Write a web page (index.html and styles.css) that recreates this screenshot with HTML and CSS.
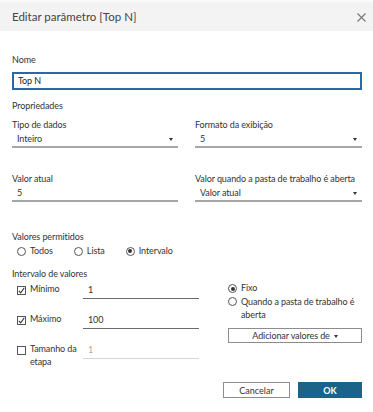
FILE: index.html
```html
<!DOCTYPE html>
<html lang="pt">
<head>
    <meta charset="UTF-8">
    <meta name="viewport" content="width=device-width, initial-scale=1.0">
    <title>Editar parâmetro</title>
    <link rel="stylesheet" href="styles.css">
</head>
<body>
    <div class="dialog">
        <div class="dlg-head">
            <span class="dlg-title">Editar parâmetro [Top N]</span>
            <span class="close">
                <svg width="9" height="9" viewBox="0 0 9 9"><path d="M0.5 0.5 L8.5 8.5 M8.5 0.5 L0.5 8.5" stroke="#777" stroke-width="1.1" fill="none"/></svg>
            </span>
        </div>

        <div class="dlg-body">
            <div class="lbl">Nome</div>
            <div class="name-input">Top N</div>

            <div class="lbl section">Propriedades</div>
            <div class="props">
                <div class="field">
                    <div class="lbl">Tipo de dados</div>
                    <div class="select">Inteiro<span class="caret"></span></div>
                </div>
                <div class="field">
                    <div class="lbl">Formato da exibição</div>
                    <div class="select">5<span class="caret"></span></div>
                </div>
                <div class="field">
                    <div class="lbl">Valor atual</div>
                    <div class="select">5</div>
                </div>
                <div class="field">
                    <div class="lbl">Valor quando a pasta de trabalho é aberta</div>
                    <div class="select">Valor atual<span class="caret"></span></div>
                </div>
            </div>

            <div class="lbl allowed">Valores permitidos</div>
            <div class="radios">
                <span class="opt"><span class="radio"></span>Todos</span>
                <span class="opt"><span class="radio"></span>Lista</span>
                <span class="opt"><span class="radio on"></span>Intervalo</span>
            </div>

            <div class="lbl interval">Intervalo de valores</div>
            <div class="range">
                <div class="range-left">
                    <div class="range-row">
                        <span class="check on"><svg width="7" height="7" viewBox="0 0 7 7"><path d="M0.8 3.8 L2.7 5.8 L6.3 0.8" stroke="#333" stroke-width="1.1" fill="none"/></svg></span>
                        <span class="range-lbl">Mínimo</span>
                        <span class="range-input">1</span>
                    </div>
                    <div class="range-row">
                        <span class="check on"><svg width="7" height="7" viewBox="0 0 7 7"><path d="M0.8 3.8 L2.7 5.8 L6.3 0.8" stroke="#333" stroke-width="1.1" fill="none"/></svg></span>
                        <span class="range-lbl">Máximo</span>
                        <span class="range-input">100</span>
                    </div>
                    <div class="range-row">
                        <span class="check"></span>
                        <span class="range-lbl">Tamanho da etapa</span>
                        <span class="range-input off">1</span>
                    </div>
                </div>
                <div class="range-right">
                    <div class="opt-line"><span class="radio on"></span><span>Fixo</span></div>
                    <div class="opt-line two"><span class="radio"></span><span>Quando a pasta de trabalho é aberta</span></div>
                    <button class="add-btn">Adicionar valores de<span class="caret"></span></button>
                </div>
            </div>

            <div class="dlg-foot">
                <button class="btn cancel">Cancelar</button>
                <button class="btn ok">OK</button>
            </div>
        </div>
    </div>
</body>
</html>
```

FILE: styles.css
```css
body {
    margin: 0;
    background-color: #fff;
    font-family: Lato, "Liberation Sans", sans-serif;
    color: #333;
}

.dialog {
    width: 373px;
    height: 412px;
    background-color: #fff;
}

.dlg-head {
    display: flex;
    align-items: center;
    justify-content: space-between;
    height: 29px;
    border-top: 2px solid #fafafa;
    background-color: #f3f3f3;
    padding: 0 7px 0 12px;
}

.dlg-title {
    font-size: 11.5px;
    color: #444;
}

.close {
    display: flex;
    margin-top: 1px;
}

.dlg-body {
    padding: 22px 11px 0 12px;
    font-size: 9px;
    letter-spacing: -0.1px;
}

.lbl {
    line-height: 14px;
    color: #333;
}

.name-input {
    margin-top: 5px;
    height: 14px;
    border: 2px solid #2a67ad;
    padding-left: 4px;
    line-height: 14px;
    color: #222;
}

.section {
    margin-top: 9px;
}

.props {
    display: grid;
    grid-template-columns: 166px 167px;
    column-gap: 17px;
    row-gap: 24px;
    margin-top: 5px;
}

.select {
    display: flex;
    align-items: center;
    justify-content: space-between;
    height: 14px;
    padding: 0 5px;
    border-bottom: 2px solid #a6a6a6;
    line-height: 14px;
}

.caret {
    width: 0;
    height: 0;
    border-left: 2.5px solid transparent;
    border-right: 2.5px solid transparent;
    border-top: 3px solid #333;
    margin-top: 1px;
}

.allowed {
    margin-top: 28px;
}

.radios {
    display: flex;
    gap: 21px;
    height: 14px;
    padding-left: 5px;
    line-height: 14px;
}

.opt {
    display: flex;
    align-items: center;
    gap: 4px;
}

.radio {
    box-sizing: border-box;
    width: 9px;
    height: 9px;
    border: 1px solid #555;
    border-radius: 50%;
    position: relative;
    flex-shrink: 0;
}

.radio.on::after {
    content: "";
    position: absolute;
    left: 1.5px;
    top: 1.5px;
    width: 4px;
    height: 4px;
    border-radius: 50%;
    background-color: #333;
}

.interval {
    margin-top: 9px;
}

.range {
    display: flex;
}

.range-left {
    width: 191px;
    margin-right: 25px;
    display: flex;
    flex-direction: column;
    gap: 12px;
}

.range-row {
    display: flex;
    align-items: flex-start;
}

.check {
    box-sizing: border-box;
    width: 9px;
    height: 9px;
    margin: 5px 0 0 5px;
    border: 1px solid #555;
    display: flex;
    align-items: center;
    justify-content: center;
}

.range-lbl {
    width: 53px;
    margin-left: 4px;
    padding-top: 1px;
    line-height: 13px;
}

.range-input {
    width: 111px;
    height: 14px;
    padding: 2px 0 1px 5px;
    border-bottom: 1px solid #6a6a6a;
    line-height: 14px;
}

.range-input.off {
    color: #aaa;
    border-bottom-color: #d6d6d6;
}

.range-right {
    flex: 1;
}

.opt-line {
    display: flex;
    align-items: flex-start;
    gap: 4px;
    line-height: 14px;
}

.opt-line .radio {
    margin-top: 3px;
}

.opt-line.two {
    line-height: 13px;
}

.opt-line.two .radio {
    margin-top: 2px;
}

.add-btn {
    display: flex;
    align-items: center;
    justify-content: center;
    gap: 4px;
    width: 100%;
    height: 15px;
    margin-top: 7px;
    padding: 0;
    border: 1px solid #8c8c8c;
    background-color: #fff;
    font-family: inherit;
    font-size: 9px;
    letter-spacing: -0.1px;
    color: #333;
}

.dlg-foot {
    display: flex;
    justify-content: flex-end;
    gap: 8px;
    margin-top: 14px;
}

.btn {
    height: 16px;
    padding: 0;
    font-family: inherit;
    font-size: 9px;
}

.cancel {
    width: 67px;
    border: 1px solid #8c8c8c;
    background-color: #fff;
    color: #333;
}

.ok {
    width: 64px;
    border: none;
    background-color: #1b6389;
    color: #fff;
    font-weight: bold;
}
```
